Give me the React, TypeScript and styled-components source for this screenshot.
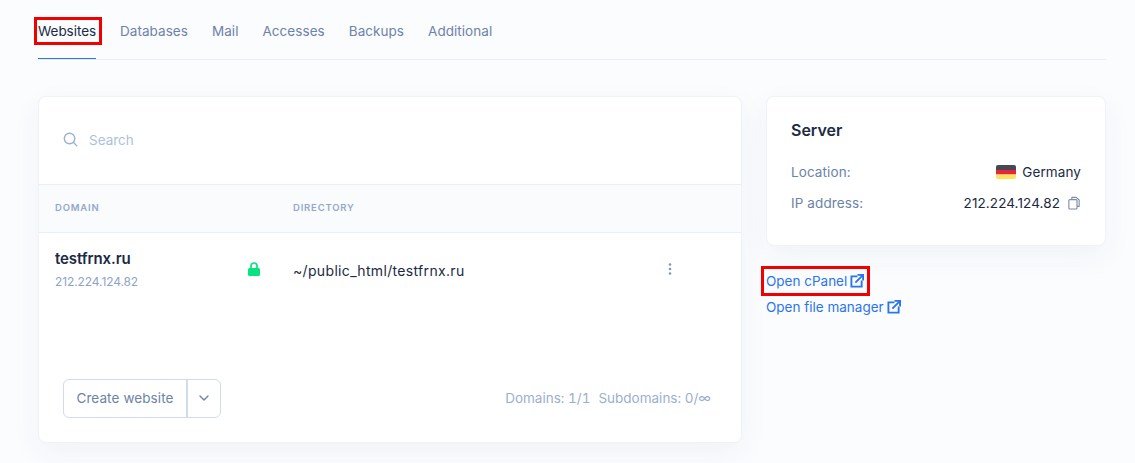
import React from 'react';
import styled, { createGlobalStyle } from 'styled-components';

const Global = createGlobalStyle`
  html, body { margin: 0; padding: 0; background: #fbfcfe; }
  body { font-family: "Inter", "Liberation Sans", sans-serif; }
  * { box-sizing: border-box; }
`;

const Page = styled.div`
  width: 1135px;
  height: 463px;
  overflow: hidden;
  padding: 0 29px 0 38px;
`;

const Tabs = styled.nav`
  display: flex;
  gap: 24px;
  height: 60px;
  padding-top: 21px;
  border-bottom: 1px solid #e6edf7;
`;

const Tab = styled.div<{ $active?: boolean }>`
  position: relative;
  height: 38px;
  font-size: 13.5px;
  line-height: 20px;
  letter-spacing: ${(p) => (p.$active ? '-0.05px' : '0.05px')};
  color: ${(p) => (p.$active ? '#1a2a45' : '#6d83a8')};
  border-bottom: 1px solid ${(p) => (p.$active ? '#2a75ee' : 'transparent')};
`;

const Annotation = styled.span<{ $top: number; $right: number; $bottom: number; $left: number }>`
  position: absolute;
  top: ${(p) => p.$top}px;
  right: ${(p) => p.$right}px;
  bottom: ${(p) => p.$bottom}px;
  left: ${(p) => p.$left}px;
  border: 3px solid #f00000;
  pointer-events: none;
`;

const Columns = styled.div`
  display: flex;
  align-items: flex-start;
  gap: 24px;
  margin-top: 36px;
`;

const Card = styled.section`
  background: #fff;
  border: 1px solid #eef3fa;
  border-radius: 8px;
  box-shadow: 0 10px 30px rgba(40, 60, 90, 0.05);
`;

const Sites = styled(Card)`
  width: 704px;
  height: 347px;
  display: flex;
  flex-direction: column;
`;

const SearchRow = styled.div`
  height: 87px;
  display: flex;
  align-items: center;
  gap: 11px;
  padding: 0 0 2px 24px;
  font-size: 13.5px;
  color: #aebfda;
`;

const TableHead = styled.div`
  height: 49px;
  display: grid;
  grid-template-columns: 238px 1fr;
  align-items: center;
  padding: 0 0 2px 16px;
  background: #f9fbfd;
  border-top: 1px solid #e8eff8;
  border-bottom: 1px solid #e8eff8;
`;

const HeadCell = styled.div`
  font-size: 9.5px;
  font-weight: 600;
  letter-spacing: 0.8px;
  color: #94a8cb;
`;

const TableRow = styled.div`
  height: 72px;
  display: grid;
  grid-template-columns: 192px 46px 1fr 22px;
  align-items: center;
  padding: 0 51px 0 16px;
`;

const DomainCell = styled.div`
  padding-top: 2px;
`;

const DomainName = styled.div`
  font-size: 15px;
  line-height: 18px;
  font-weight: 600;
  letter-spacing: -0.1px;
  color: #1a2a45;
`;

const DomainIp = styled.div`
  margin-top: 6px;
  font-size: 12px;
  line-height: 16px;
  letter-spacing: -0.1px;
  color: #8fa3c6;
`;

const Directory = styled.div`
  margin-top: 2px;
  font-size: 14px;
  letter-spacing: 0.33px;
  color: #1a2a45;
`;

const Footer = styled.div`
  margin-top: auto;
  height: 88px;
  padding: 0 30px 0 24px;
  display: flex;
  align-items: center;
  justify-content: space-between;
`;

const SplitButton = styled.div`
  height: 39px;
  display: flex;
  align-items: stretch;
  border: 1px solid #d0dcec;
  border-radius: 6px;
  background: #fff;
  color: #6d83a8;
`;

const MainAction = styled.div`
  width: 124px;
  display: flex;
  align-items: center;
  justify-content: center;
  font-size: 13.5px;
  letter-spacing: 0.1px;
  border-right: 2px solid #d0dcec;
`;

const Caret = styled.div`
  width: 32px;
  display: flex;
  align-items: center;
  justify-content: center;
`;

const Quota = styled.div`
  display: flex;
  gap: 8px;
  font-size: 13.5px;
  font-variant-numeric: tabular-nums;
  color: #9bafd0;
`;

const Side = styled.aside`
  width: 340px;
`;

const ServerCard = styled(Card)`
  height: 150px;
  padding: 23px 24px 0;
`;

const Title = styled.h2`
  margin: 0 0 16px;
  font-size: 16px;
  line-height: 20px;
  font-weight: 600;
  color: #1a2a45;
`;

const InfoRow = styled.div`
  display: flex;
  justify-content: space-between;
  align-items: center;
  height: 31px;
  font-size: 13.5px;
  letter-spacing: 0.1px;
`;

const InfoLabel = styled.span`
  color: #6d83a8;
`;

const InfoValue = styled.span`
  display: flex;
  align-items: center;
  gap: 6px;
  color: #1a2a45;
`;

const CopyButton = styled.span`
  display: flex;
  margin: 0 1px 0 2px;
`;

const Links = styled.div`
  margin-top: 25px;
  display: flex;
  flex-direction: column;
  align-items: flex-start;
  gap: 6px;
`;

const ExtLink = styled.a`
  position: relative;
  display: flex;
  align-items: center;
  gap: 3px;
  height: 20px;
  font-size: 13.5px;
  letter-spacing: 0;
  color: #2a75ee;
`;

const Flag = () => (
  <svg width="20" height="14" viewBox="0 0 20 14">
    <defs>
      <clipPath id="flag"><rect width="20" height="14" rx="2" /></clipPath>
    </defs>
    <g clipPath="url(#flag)">
      <rect width="20" height="5" fill="#464655" />
      <rect y="5" width="20" height="4.5" fill="#e3263a" />
      <rect y="9.5" width="20" height="4.5" fill="#ffe15a" />
    </g>
  </svg>
);

const SearchIcon = () => (
  <svg width="15" height="15" viewBox="0 0 16 16" fill="none" stroke="#9cb0cf" strokeWidth="1.5" strokeLinecap="round">
    <circle cx="7" cy="7" r="5.6" />
    <path d="M11.2 11.2 14.8 14.8" />
  </svg>
);

const Lock = () => (
  <svg width="14" height="14" viewBox="0 0 14 14">
    <rect x="1" y="6" width="12" height="8" rx="1.5" fill="#06e37f" />
    <path d="M4 7V4a3 3 0 0 1 6 0v3" fill="none" stroke="#06e37f" strokeWidth="1.7" />
  </svg>
);

const Dots = () => (
  <svg width="4" height="12" viewBox="0 0 4 12" fill="#7f96bd">
    <circle cx="2" cy="1.5" r="1.3" />
    <circle cx="2" cy="6" r="1.3" />
    <circle cx="2" cy="10.5" r="1.3" />
  </svg>
);

const Chevron = () => (
  <svg width="10" height="6" viewBox="0 0 10 6" fill="none" stroke="#6d83a8" strokeWidth="1.4" strokeLinecap="round" strokeLinejoin="round">
    <path d="M1 1l4 4 4-4" />
  </svg>
);

const Copy = () => (
  <svg width="12" height="14" viewBox="0 0 14 15" fill="none" stroke="#7d8ca6" strokeWidth="1.3" strokeLinejoin="round">
    <path d="M4.5 3.5V1h5l3.5 3v7.5h-2.5" />
    <rect x="1" y="3.5" width="9.5" height="11" rx="1.2" />
  </svg>
);

const External = () => (
  <svg width="14" height="14" viewBox="0 0 15 15" fill="none" stroke="#2a75ee" strokeWidth="2" strokeLinecap="square">
    <path d="M7 2.5H1.5v11h11V8" />
    <path d="M6.5 8.5 13.5 1.5M9 1h5v5" />
  </svg>
);

export default function App() {
  return (
    <Page>
      <Global />
      <Tabs>
        <Tab $active>
          Websites
          <Annotation $top={-4} $right={-6} $bottom={13} $left={-4} />
        </Tab>
        <Tab>Databases</Tab>
        <Tab>Mail</Tab>
        <Tab>Accesses</Tab>
        <Tab>Backups</Tab>
        <Tab>Additional</Tab>
      </Tabs>
      <Columns>
        <Sites>
          <SearchRow>
            <SearchIcon />
            Search
          </SearchRow>
          <TableHead>
            <HeadCell>DOMAIN</HeadCell>
            <HeadCell>DIRECTORY</HeadCell>
          </TableHead>
          <TableRow>
            <DomainCell>
              <DomainName>testfrnx.ru</DomainName>
              <DomainIp>212.224.124.82</DomainIp>
            </DomainCell>
            <Lock />
            <Directory>~/public_html/testfrnx.ru</Directory>
            <Dots />
          </TableRow>
          <Footer>
            <SplitButton>
              <MainAction>Create website</MainAction>
              <Caret><Chevron /></Caret>
            </SplitButton>
            <Quota>
              <span>Domains: 1/1</span>
              <span>Subdomains: 0/∞</span>
            </Quota>
          </Footer>
        </Sites>
        <Side>
          <ServerCard>
            <Title>Server</Title>
            <InfoRow>
              <InfoLabel>Location:</InfoLabel>
              <InfoValue><Flag />Germany</InfoValue>
            </InfoRow>
            <InfoRow>
              <InfoLabel>IP address:</InfoLabel>
              <InfoValue>212.224.124.82<CopyButton><Copy /></CopyButton></InfoValue>
            </InfoRow>
          </ServerCard>
          <Links>
            <ExtLink>
              Open cPanel <External />
              <Annotation $top={-5} $right={-6} $bottom={-5} $left={-5} />
            </ExtLink>
            <ExtLink>Open file manager <External /></ExtLink>
          </Links>
        </Side>
      </Columns>
    </Page>
  );
}
